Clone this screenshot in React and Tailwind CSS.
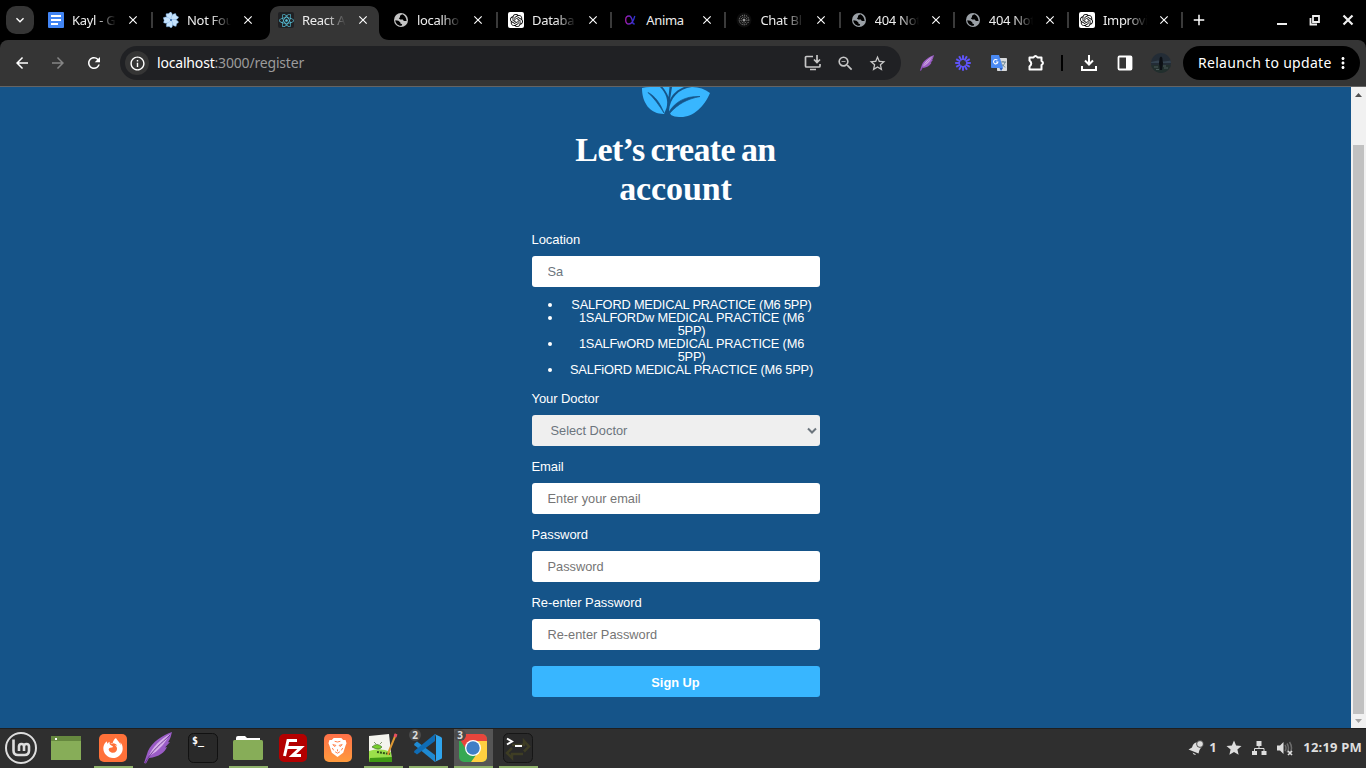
import React from "react";
import {
  MdArrowBack, MdArrowForward, MdRefresh, MdInfoOutline, MdOutlineZoomOut,
  MdStarBorder, MdClose, MdAdd, MdStar, MdMoreVert, MdKeyboardArrowDown,
} from "react-icons/md";
import { FaReact } from "react-icons/fa";
import { SiOpenai, SiFirefoxbrowser } from "react-icons/si";

const DocsIcon = () => (
  <svg viewBox="0 0 16 16" className="size-4"><rect width="16" height="16" rx="1" fill="#4285f4" /><path d="M3 4h10M3 8h10M3 12h7" stroke="#fff" strokeWidth="2" /></svg>
);
const FlowerIcon = () => (
  <svg viewBox="0 0 16 16" className="size-4">
    <g fill="#c5e2fc" stroke="#6fa9e6" strokeWidth=".4">
      {[-20, 52, 124, 196, 268].map((a) => (
        <path key={a} transform={`rotate(${a} 8 8)`} d="M8 8C5 6 4 2.500 5.700 .4L8 1.200L10.400 .2C12 3 11 6 8 8z" />
      ))}
    </g>
    <circle cx="8" cy="8" r="1" fill="#315f9e" />
  </svg>
);
const Globe = ({ color }) => (
  <svg viewBox="0 0 16 16" className="size-4">
    <circle cx="8" cy="8" r="7" fill={color} />
    <path d="M9.200 2.300L7 3.800V5.200L5.800 6.200L7.200 7.600H9.800L10.800 9H13.600C13.400 6 11.800 3.200 9.200 2.300zM2.300 8.200L5.400 8.800L7.400 10.400V11.600L9.200 12.300L8.600 13.700C5 14 2.500 11.500 2.300 8.200z" fill="#000" />
  </svg>
);
const Gpt = () => (
  <span className="flex size-4 items-center justify-center rounded-[2px] bg-white text-black"><SiOpenai size={13} /></span>
);
const Alpha = () => (
  <svg viewBox="0 0 16 16" className="size-4">
    <defs><linearGradient id="alpha"><stop offset="0" stopColor="#a21caf" /><stop offset="1" stopColor="#2436d9" /></linearGradient></defs>
    <path d="M12.800 4C12 7 10 12 7 12S3.700 10 3.700 7.900 4.500 4 7 4 10 7 10.500 9.500s1 2.700 2.300 2.300" fill="none" stroke="url(#alpha)" strokeWidth="1.300" />
  </svg>
);
const DotsIcon = () => (
  <svg viewBox="0 0 16 16" className="size-4">
    <circle cx="8" cy="8" r="7.500" fill="#0d0d0d" />
    <g fill="none" stroke="#a3a3a3" strokeWidth=".9" strokeDasharray="1.100 .9"><circle cx="8" cy="8" r="4.800" /><circle cx="8" cy="8" r="3" /></g>
    <circle cx="8" cy="8" r="1.500" fill="#999" />
  </svg>
);

const tabs = [
  { t: "Kayl - G", icon: <DocsIcon /> },
  { t: "Not Fou", icon: <FlowerIcon /> },
  { t: "React A", icon: <span className="flex size-4 items-center justify-center rounded-[2px] bg-[#202124] text-[#58c4dc]"><FaReact size={15} /></span>, active: true },
  { t: "localho", icon: <Globe color="#c4c4c4" /> },
  { t: "Databa", icon: <Gpt /> },
  { t: "Anima", icon: <Alpha />, full: true },
  { t: "Chat Bl", icon: <DotsIcon /> },
  { t: "404 Not", icon: <Globe color="#9aa0a6" /> },
  { t: "404 Not", icon: <Globe color="#9aa0a6" /> },
  { t: "Improvi", icon: <Gpt /> },
];

function Tab({ tab, divider, wide }) {
  return (
    <div className={`relative flex h-[34px] shrink-0 items-center pb-[6px] pl-[10px] ${wide ? "w-[115px]" : "w-[114.200px]"} ${tab.active ? "z-10" : ""}`}>
      {tab.active && (
        <svg className="absolute -left-[8px] top-0 h-[34px] w-[129px]" viewBox="0 0 129 34">
          <path d="M0 34C6 34 10 30 10 24V10C10 4 14 0 20 0H109C115 0 119 4 119 10V24C119 30 123 34 129 34z" fill="#353535" />
        </svg>
      )}
      <span className="relative shrink-0">{tab.icon}</span>
      <span className={`relative ml-2 w-[48px] whitespace-nowrap text-[13px] leading-5 tracking-[-0.300px] text-[#ededed] ${tab.full ? "" : "[mask-image:linear-gradient(to_right,black_50%,transparent_92%)]"}`}>{tab.t}</span>
      <MdClose className="relative ml-[6px] shrink-0 text-white" size={14} />
      {divider && <span className="ml-auto h-4 w-[2px] bg-[#3a3a3a]" />}
    </div>
  );
}

const Feather = ({ className }) => (
  <svg viewBox="0 0 30 32" className={className}>
    <path d="M29 0C20 3 9 10 5 19L1 31l2 .5L6 26C16 25 22 20 24 15l-2 .5L27 10l-2 .3C28 6 28 3 29 0z" fill="#9a5cc6" />
    <path d="M27 2C18 7 9 15 6 24l5-3C17 17 22 11 27 2z" fill="#d5afe8" />
    <path d="M27 3C19 11 9 18 2 31" stroke="#6e3796" fill="none" strokeWidth="1" />
  </svg>
);
const Burst = () => (
  <svg viewBox="0 0 16 16" className="size-4">
    {Array.from({ length: 12 }, (_, i) => (
      <path key={i} d="M8 .2V5" stroke="#6055ff" strokeWidth="1.900" transform={`rotate(${i * 30} 8 8)`} />
    ))}
  </svg>
);
const Translate = () => (
  <svg viewBox="0 0 16 16" className="size-4">
    <rect x="6" y="3" width="10" height="13" rx=".8" fill="#d8dadc" />
    <path d="M9.500 7h5.500M12 6v1M14 7c-.5 2.500-2 3.800-3.500 4.800M10.500 8.500c1 2 2.500 3 3.800 3.700" stroke="#5f7d8c" fill="none" strokeWidth=".9" />
    <path d="M.8 0H8l4 13H.8A.8.8 0 0 1 0 12.200V.8A.8.8 0 0 1 .8 0z" fill="#4a8af4" />
    <path d="M8.500 13H12l-2 3z" fill="#2b5fc4" />
    <path d="M6.400 5.200A2.200 2.200 0 1 0 6.900 7H4.900" stroke="#fff" fill="none" strokeWidth="1.100" />
  </svg>
);

function Browser() {
  return (
    <>
      <div className="flex h-10 w-full items-start bg-black pt-[6px]">
        <div className="ml-[6px] flex size-7 shrink-0 items-center justify-center rounded-[10px] bg-[#353535] text-white"><MdKeyboardArrowDown size={16} /></div>
        <div className="ml-[4px] flex">
          {tabs.map((t, i) => <Tab key={i} tab={t} wide={i < 4} divider={i !== 1 && i !== 2} />)}
        </div>
        <MdAdd className="ml-[7px] mt-[5px] shrink-0 text-white" size={18} />
        <div className="ml-auto mr-[12px] mt-[8px] flex items-center gap-[21px] text-[#eee]">
          <svg viewBox="0 0 12 12" className="size-3"><path d="M1 10h10" stroke="currentColor" strokeWidth="2" /></svg>
          <svg viewBox="0 0 12 12" className="size-3"><path d="M4 2h6v6H4zM1.500 4v6.500H8" stroke="currentColor" strokeWidth="1.800" fill="none" /></svg>
          <svg viewBox="0 0 12 12" className="size-3"><path d="M1.500 1.500l9 9M10.500 1.500l-9 9" stroke="currentColor" strokeWidth="2.200" /></svg>
        </div>
      </div>
      <div className="bg-black">
        <div className="flex h-[46px] items-center rounded-t-[8px] bg-[#353535] text-white">
          <MdArrowBack className="ml-[13px] shrink-0" size={18} />
          <MdArrowForward className="ml-[18px] shrink-0 text-[#858585]" size={18} />
          <MdRefresh className="ml-[18px] shrink-0" size={18} />
          <div className="ml-[17px] flex h-[34px] w-[781px] shrink-0 items-center rounded-full bg-[#202124] pl-[5px] text-[#c7c7c7]">
            <span className="flex size-6 items-center justify-center rounded-full bg-[#353535] text-white"><MdInfoOutline size={17} /></span>
            <span className="ml-2 whitespace-nowrap pb-[2px] text-[14px] tracking-[-0.180px] text-[#9b9b9b]"><span className="text-white">localhost</span>:3000/register</span>
            <svg viewBox="0 0 18 16" className="ml-auto h-4 w-[18px]" fill="none" stroke="currentColor" strokeWidth="1.700"><path d="M9 1.500H2.500Q1.500 1.500 1.500 2.500V11Q1.500 12 2.500 12H15Q16 12 16 11V9M13 0V7M10 4.500L13 7.500L16 4.500M6 14.500H12" /></svg>
            <MdOutlineZoomOut className="ml-[14px]" size={19} />
            <MdStarBorder className="ml-[13px] mr-[14px]" size={19} />
          </div>
          <Feather className="ml-[18px] h-4 w-[16px] shrink-0" />
          <span className="ml-[20px]"><Burst /></span>
          <span className="ml-[20px]"><Translate /></span>
          <svg viewBox="0 0 18 18" className="ml-[20px] size-[18px]" fill="none" stroke="white" strokeWidth="2"><path d="M2.500 3.500H6.500Q8.500 .5 10.500 3.500H14.500V7Q17.500 9 14.500 11V15.500H2.500V12.500Q6 9.500 2.500 6.500z" strokeLinejoin="round" /></svg>
          <span className="ml-[16px] h-4 w-[2px] bg-black" />
          <svg viewBox="0 0 16 16" className="ml-[18px] size-4" fill="none" stroke="white" strokeWidth="2"><path d="M8 0V9M4 5.500L8 9.500L12 5.500M1 11V15H15V11" /></svg>
          <svg viewBox="0 0 16 16" className="ml-[20px] size-4"><rect x="1.500" y="1.500" width="13" height="13" rx="1" fill="none" stroke="white" strokeWidth="1.800" /><path d="M9 1h6v14H9z" fill="white" /></svg>
          <svg viewBox="0 0 20 20" className="ml-[18px] size-5"><defs><clipPath id="avatar"><circle cx="10" cy="10" r="10" /></clipPath></defs><g clipPath="url(#avatar)"><path d="M0 0h20v20H0z" fill="#232c36" /><path d="M0 9l7-1.500 6 1 7-1v2.500H0z" fill="#34424f" /><path d="M0 12h20v8H0z" fill="#222f2d" /><path d="M8.700 5Q10 2 11.300 5L12 10l-1 7H9l-1-7z" fill="#0c0f14" /><path d="M3 14h4M13 15h4M5 16.500h3M12 13h3" stroke="#4a5a5a" /></g></svg>
          <div className="ml-[12px] flex h-[34px] w-[177px] shrink-0 items-center rounded-full bg-black pl-[15px]">
            <span className="whitespace-nowrap pb-[2px] text-[14px] tracking-[0.300px]">Relaunch to update</span>
            <MdMoreVert className="ml-auto mr-[8px]" size={18} />
          </div>
        </div>
      </div>
      <div className="h-px bg-[#646464]" />
    </>
  );
}

function Field({ label, children, className = "" }) {
  return (
    <div className={className}>
      <label className="-ml-[0.500px] mb-[10px] block h-[13px] text-[13px] leading-[13px] tracking-[-0.070px] text-white">{label}</label>
      {children}
    </div>
  );
}
const Input = ({ placeholder, className = "placeholder:text-[#757575]" }) => (
  <input placeholder={placeholder} className={`block h-[31px] w-full rounded-[3px] bg-white px-[15.500px] text-[12.800px] leading-[15px] outline-none ${className}`} />
);

function Register() {
  return (
    <div className="flex flex-1 overflow-hidden bg-[#155489]">
      <main className="flex-1 font-['Liberation_Sans',sans-serif] text-[13px]">
        <div className="ml-[532px] w-[288px]">
          <svg viewBox="0 0 68 31" className="ml-[110px] h-[31px] w-[68px]">
            <path d="M0 1Q4 0 8 0H18C24 6 26.500 13 24.500 21L22 27C8 27 0 16 0 1z" fill="#38b6ff" />
            <path d="M20.500 0H27.500L26.500 10C25 6 23 3 20.500 0zM30 0H42C35 3 30.500 7 28 13z" fill="#38b6ff" />
            <path d="M27 24C28 11 36 2 50 0C57 0 63 2 68 6C62 20 51 31 37 30C34 30 31 29 29 28z" fill="#38b6ff" />
            <path d="M6 5.500C13 9 18 16 22 26C17 18 12 11 6 5.500zM27 25C33 15 43 9 58 9.500C45 12 36 17 28 26z" fill="#155489" stroke="#155489" strokeWidth=".7" />
          </svg>
          <h1 className="-ml-px mt-[12px] text-center font-['Liberation_Serif',serif] text-[34px] font-bold leading-[39px] tracking-[-0.600px] text-white [word-spacing:-2px]">Let’s create an<br /><span className="tracking-[-0.100px]">account</span></h1>
          <Field label="Location" className="mt-[25px]"><Input placeholder="Sa" className="placeholder:text-[#6c757d]" /></Field>
          <ul className="-ml-[2px] mt-[11px] list-disc pl-[33px] text-center text-[12.800px] leading-[13px] tracking-[-0.180px] text-white">
            <li>SALFORD MEDICAL PRACTICE (M6 5PP)</li>
            <li>1SALFORDw MEDICAL PRACTICE (M6<br />5PP)</li>
            <li>1SALFwORD MEDICAL PRACTICE (M6<br />5PP)</li>
            <li>SALFiORD MEDICAL PRACTICE (M6 5PP)</li>
          </ul>
          <Field label="Your Doctor" className="mt-[16px]">
            <div className="flex h-[31px] items-center rounded-[3px] bg-[#efefef] pl-[18.500px] pr-[3px] text-[12.800px] text-[#6c757d]">
              Select Doctor
              <svg viewBox="0 0 10 8" className="ml-auto h-2 w-[10px]"><path d="M1 1.500L5 5.500L9 1.500" fill="none" stroke="currentColor" strokeWidth="2" /></svg>
            </div>
          </Field>
          <Field label="Email" className="mt-[14px]"><Input placeholder="Enter your email" /></Field>
          <Field label="Password" className="mt-[14px]"><Input placeholder="Password" /></Field>
          <Field label="Re-enter Password" className="mt-[14px]"><Input placeholder="Re-enter Password" /></Field>
          <button className="mt-4 flex h-[31px] w-full items-center justify-center rounded-[3px] bg-[#38b6ff] pr-px pt-[2px] text-[12.800px] font-bold text-white">Sign Up</button>
        </div>
      </main>
      <div className="flex w-[15px] flex-col items-center bg-[#f1f1f1]">
        <svg viewBox="0 0 15 16" className="h-4 w-[15px]"><path d="M4 10h7L7.500 6z" fill="#505050" /></svg>
        <div className="mt-[42px] w-[11px] flex-1 bg-[#c1c1c1]" />
        <svg viewBox="0 0 15 14" className="h-[14px] w-[15px]"><path d="M4 5h7L7.500 9z" fill="#a3a3a3" /></svg>
      </div>
    </div>
  );
}

function Slot({ children, running, active, count }) {
  return (
    <div className={`relative flex h-[39px] w-[39px] shrink-0 items-center justify-center pr-[2px] ${active ? "bg-[#555555]" : ""} ${running ? "border-b-2 border-[#8fb26b]" : "pb-[2px]"}`}>
      {children}
      {count && <span className="absolute left-0 top-0 flex size-3 items-center justify-center rounded-full bg-[#4a4a4a] text-[10px] font-bold leading-none text-[#ddd]">{count}</span>}
    </div>
  );
}
const Tile = ({ className, children }) => (
  <span className={`flex size-7 shrink-0 items-center justify-center rounded-[5px] ${className}`}>{children}</span>
);

function Taskbar() {
  return (
    <div className="flex h-10 items-center border-t border-[#1f1f1f] bg-[#2f2f2f]">
      <div className="mb-px ml-[5px] flex size-8 items-center justify-center rounded-full border-[2.500px] border-[#dedede] text-[#dedede]">
        <svg viewBox="0 0 24 24" className="size-6 shrink-0" fill="none" stroke="currentColor" strokeWidth="2.600"><path d="M4.500 3.500V14.500Q4.500 19 9 19H15.500Q20 19 20 14.500V10.500Q20 8 17.500 8T15 10.500V15M15 10.500Q15 8 12.500 8T10 10.500V15" /></svg>
      </div>
      <svg viewBox="0 0 30 24" className="mb-px ml-[14px] h-6 w-[30px]"><path d="M0 0h30v24H0z" fill="#87ad58" /><path d="M0 0h30v5H0z" fill="#66883f" /><path d="M4 2h2v2H4z" fill="#fff" /></svg>
      <div className="ml-[13px] flex gap-[6px]">
        <Slot running><Tile className="bg-[#ff7139] text-white"><SiFirefoxbrowser size={20} /></Tile></Slot>
        <Slot><Feather className="h-8 w-[30px]" /></Slot>
        <Slot>
          <svg viewBox="0 0 30 30" className="size-[30px]"><rect x=".5" y=".5" width="29" height="29" rx="5" fill="#292929" stroke="#111" /><text x="4" y="11" fontSize="10" fontWeight="bold" fill="#fff" fontFamily="DejaVu Sans Mono, monospace">$_</text></svg>
        </Slot>
        <Slot running><svg viewBox="0 0 30 24" className="h-6 w-[30px]"><path d="M3 5V2Q3 0 5 0H12L14 2H27V5z" fill="#fff" /><rect y="4" width="30" height="20" rx="1.500" fill="#87ad58" /></svg></Slot>
        <Slot><Tile className="bg-[#b30000] text-white"><svg viewBox="0 0 28 28" className="size-7" fill="none" stroke="#fff" strokeWidth="3"><path d="M18 6.500H9L5.500 22M7 13.500H13M12 13.500H22L13.500 21.500H22" /></svg></Tile></Slot>
        <Slot>
          <Tile className="bg-linear-to-b from-[#ff7048] to-[#ff9a3c]">
            <svg viewBox="0 0 20 22" className="h-[21px] w-[19px]">
              <path d="M6 1H14L16 3L18.500 3L19.500 6.500L18.500 9L16 16.500L10 21L4 16.500L1.500 9L.5 6.500L1.500 3L4 3z" fill="#fff" />
              <path d="M5 8L8.300 8.700L7.300 10zM15 8L11.700 8.700L12.700 10zM4.500 11.500L6 14M15.500 11.500L14 14M10 13V15M7.500 15.500L10 17L12.500 15.500M7 4.500L10 5.200L13 4.500" fill="none" stroke="#ff7b45" strokeWidth="1" />
            </svg>
          </Tile>
        </Slot>
        <Slot running>
          <svg viewBox="0 0 30 30" className="size-[30px]"><path d="M1 3L21 1L24 29H1z" fill="#f4f4ee" /><path d="M1 18Q12 14 23 19L24 29H1z" fill="#9be04a" /><path d="M2 25l22-1v5H1z" fill="#3f9913" /><path d="M4 14q5-5 10 0q-3 4-10 0M8 11l-2-2M12 11l2-2" fill="#74cf2b" stroke="#325c18" strokeWidth=".6" /><path d="M9 19l13 2" stroke="#31521a" strokeWidth="2" strokeDasharray="2 1" /><path d="M28 1L21 18l-1 4" stroke="#dd9833" strokeWidth="2" fill="none" /><path d="M28 1l-1 3" stroke="#e84d62" strokeWidth="3" /></svg>
        </Slot>
        <Slot running count="2">
          <svg viewBox="0 0 30 30" className="size-[30px]">
            <path d="M1.500 11L4 9L23 24V29L1.500 20.500Q.8 19.500 1.700 18.800L23 1V7L4 21.500z" fill="none" />
            <path d="M4 8.500L1.300 10.800Q.8 11.500 1.500 12.200L22 29V22z" fill="#1f8ad2" />
            <path d="M4 21.500L1.300 19.200Q.8 18.500 1.500 17.800L22 1V8z" fill="#0f6cb5" />
            <path d="M21.500 1L28 4Q29 4.500 29 5.500V24.500Q29 25.500 28 26L21.500 29Q23 28 23 26V4Q23 2 21.500 1z" fill="#2fa5ee" />
          </svg>
        </Slot>
        <Slot running active count="3">
          <svg viewBox="0 0 28 28" className="size-7"><defs><clipPath id="chrome"><rect width="28" height="28" rx="5" /></clipPath></defs><g clipPath="url(#chrome)"><path d="M0 0h28v28H0z" fill="#36a852" /><path d="M14 7H28V28H12L20 17z" fill="#ffcf40" /><path d="M0 0H28V7H14L8 17 0 4z" fill="#e8453c" /><circle cx="14" cy="14" r="8" fill="#fff" /><circle cx="14" cy="14" r="6.700" fill="#3f7fc6" /></g></svg>
        </Slot>
        <Slot running>
          <svg viewBox="0 0 30 30" className="size-[30px]"><rect x=".5" y=".5" width="29" height="29" rx="5" fill="#292929" stroke="#161616" /><path d="M9 12h12V8l5 5.500-5 5M20 21H9v4l-5-5 5-5" fill="none" stroke="#3e3d24" strokeWidth="2.500" /><path d="M4 5.500l5 3-5 3M12 13h7" fill="none" stroke="#fff" strokeWidth="2" /></svg>
        </Slot>
      </div>
      <div className="mb-px ml-auto mr-[4px] flex items-center text-[13px] font-bold text-[#dedede]">
        <svg viewBox="0 0 16 16" className="size-4"><path d="M.5 9.500L4 7.500Q5.500 2 9.500 2.500L13.500 7Q11.500 9 10.500 13.500z" fill="currentColor" /><circle cx="12" cy="4" r="3.400" fill="currentColor" stroke="#2f2f2f" strokeWidth=".8" /><path d="M4.500 12.500L8 14.200Q6 16 4.500 12.500" fill="currentColor" /></svg>
        <span className="ml-[5px] w-2">1</span>
        <MdStar className="ml-[8px]" size={18} />
        <svg viewBox="0 0 16 16" className="ml-[8px] size-4" fill="currentColor"><path d="M5.500 1h5v5h-5zM1 11h5v4H1zM10.500 11h5v4h-5z" /><path d="M8 5v3.500M3.500 11V8.500H13V11" fill="none" stroke="currentColor" /></svg>
        <svg viewBox="0 0 18 16" className="ml-[9px] h-4 w-[18px]"><path d="M1 5.500H4L7.500 2V14L4 10.500H1z" fill="currentColor" /><path d="M9 5q2 3 0 6M11 3.500q3 4.500 0 9M13.500 2q4 6 0 12" fill="none" stroke="#6c6c6c" strokeWidth="1.500" /><path d="M12 11l4 4M16 11l-4 4" stroke="currentColor" strokeWidth="1.700" /></svg>
        <span className="ml-[9px] whitespace-nowrap tracking-[0.200px]">12:19 PM</span>
      </div>
    </div>
  );
}

export default function App() {
  return (
    <div className="flex h-[768px] w-[1366px] flex-col overflow-hidden font-['Noto_Sans',sans-serif]">
      <Browser />
      <Register />
      <Taskbar />
    </div>
  );
}
